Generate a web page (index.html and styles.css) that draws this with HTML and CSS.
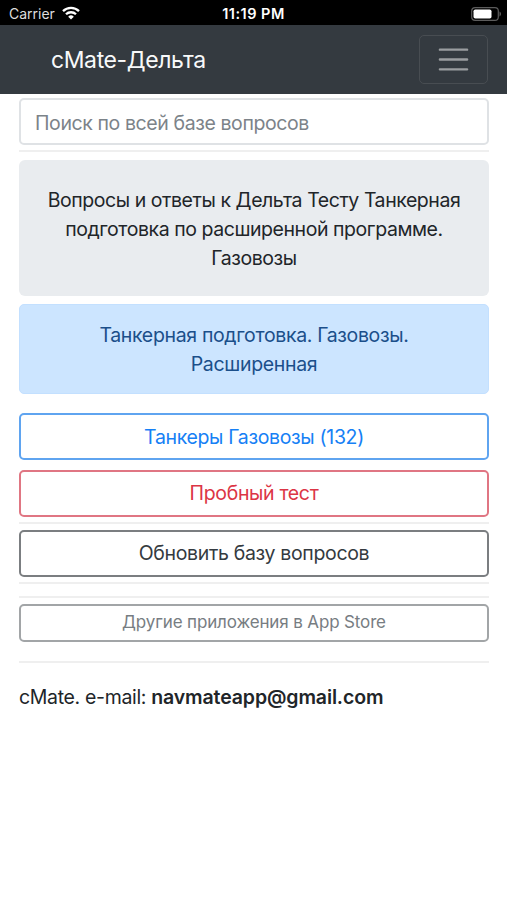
FILE: index.html
```html
<!DOCTYPE html>
<html lang="ru">
<head>
  <meta charset="UTF-8" />
  <meta name="viewport" content="width=device-width, initial-scale=1.0" />
  <title>cMate-Дельта</title>
  <link rel="stylesheet" href="styles.css">
</head>
<body>
  <div class="status-bar">
    <div class="carrier">
      <span>Carrier</span>
      <svg class="wifi" width="18" height="14" viewBox="0 0 18 14" fill="none" stroke="#fff" stroke-width="2.3">
        <path d="M1 5.1a11.4 11.4 0 0 1 16 0" />
        <path d="M4 8.3a7.1 7.1 0 0 1 10 0" />
        <path d="M9 13.5L6.2 10.7a4 4 0 0 1 5.6 0z" fill="#fff" stroke="none" />
      </svg>
    </div>
    <div class="time">11:19 PM</div>
    <svg class="battery" width="31" height="14" viewBox="0 0 31 14">
      <rect x="0.7" y="0.7" width="26.6" height="12.6" rx="3.4" fill="none" stroke="#5c5c5c" stroke-width="1.2" />
      <rect x="2.5" y="2.4" width="18" height="9.2" rx="1.8" fill="#fff" />
      <path d="M28.5 4.6v4.8c2-.8 2-4 0-4.8z" fill="#5c5c5c" />
    </svg>
  </div>

  <nav class="navbar">
    <a class="navbar-brand">cMate-Дельта</a>
    <button class="navbar-toggler" aria-label="Меню">
      <svg width="37" height="37" viewBox="0 0 30 30" stroke="#9a9da0" stroke-width="2" stroke-linecap="round">
        <path d="M4 7h22M4 15h22M4 23h22" />
      </svg>
    </button>
  </nav>

  <main class="container">
    <input class="search" type="text" placeholder="Поиск по всей базе вопросов">
    <hr>
    <div class="jumbotron">Вопросы и ответы к Дельта Тесту Танкерная<br>подготовка по расширенной программе.<br>Газовозы</div>
    <div class="alert">Танкерная подготовка. Газовозы.<br>Расширенная</div>
    <button class="btn btn-primary">Танкеры Газовозы (132)</button>
    <button class="btn btn-danger">Пробный тест</button>
    <hr>
    <button class="btn btn-dark">Обновить базу вопросов</button>
    <hr>
    <hr class="second">
    <button class="btn btn-small">Другие приложения в App Store</button>
    <hr class="footer-line">
    <p class="contact">cMate. e-mail: <b>navmateapp@gmail.com</b></p>
  </main>
</body>
</html>
```

FILE: styles.css
```css
* {
  box-sizing: border-box;
}

body {
  margin: 0;
  font-family: Inter, Roboto, sans-serif;
  font-size: 19.5px;
  line-height: 29.3px;
  letter-spacing: -0.34px;
  color: #212529;
  background: #fff;
}

.status-bar {
  display: grid;
  grid-template-columns: 1fr auto 1fr;
  align-items: center;
  height: 25px;
  padding: 2px 9px 0;
  background: #000;
  color: #fff;
  font-size: 14px;
  line-height: 20px;
  letter-spacing: 0;
}

.carrier {
  display: flex;
  align-items: center;
  gap: 7px;
  color: #ddd;
}

.time {
  font-size: 14.5px;
  font-weight: 600;
  letter-spacing: 0.5px;
}

.battery {
  justify-self: end;
  margin-right: -4px;
}

.wifi {
  margin: -1px 0 1px;
}

.navbar {
  display: flex;
  align-items: center;
  justify-content: space-between;
  height: 68.5px;
  padding: 0 19px 0 51px;
  background: #343a40;
}

.navbar-brand {
  padding-top: 3px;
  color: #f8f9fa;
  font-size: 23px;
  letter-spacing: -0.4px;
}

.navbar-toggler {
  display: flex;
  align-items: center;
  justify-content: center;
  width: 69px;
  height: 49px;
  padding: 0;
  background: none;
  border: 1px solid #484d52;
  border-radius: 5px;
}

.container {
  display: flex;
  flex-direction: column;
  padding: 4.5px 18px 0 19px;
}

.search {
  width: 100%;
  height: 47px;
  padding: 2px 15px 0 14px;
  border: 2px solid #dfe2e5;
  border-radius: 5px;
  font: inherit;
  letter-spacing: -0.4px;
}

.search::placeholder {
  color: #7c8389;
  opacity: 1;
}

hr {
  width: 100%;
  height: 2px;
  margin: 5px 0 6px;
  border: 0;
  background: #efefef;
}

.jumbotron {
  height: 136px;
  margin: 2px 0 8px;
  padding: 25.5px 0;
  border-radius: 6px;
  background: #e9ecef;
  letter-spacing: -0.44px;
  text-align: center;
}

.alert {
  height: 90px;
  margin-bottom: 19px;
  padding: 16px 0;
  border: 1px solid #c3e0ff;
  border-radius: 5px;
  background: #cce5ff;
  color: #1b4f8a;
  text-align: center;
}

.btn {
  height: 47px;
  padding: 2px 0 0;
  border: 2px solid;
  border-radius: 5px;
  background: #fff;
  font: inherit;
  letter-spacing: inherit;
}

.btn-primary {
  margin-bottom: 9.5px;
  border-color: #5fa4f0;
  color: #1680f5;
}

.btn-danger {
  border-color: #e07683;
  color: #dc3545;
}

.btn-dark {
  border-color: #7b7e81;
  color: #343a40;
}

.btn-small {
  height: 38px;
  padding: 1px 0 0;
  border-color: #a2a5a7;
  color: #777d82;
  font-size: 17px;
  letter-spacing: -0.14px;
}

.second {
  margin-top: 6px;
}

.footer-line {
  margin: 19px 0 20.5px;
}

.contact {
  margin: 0;
}

.contact b {
  font-weight: 600;
  letter-spacing: -0.12px;
}
```
